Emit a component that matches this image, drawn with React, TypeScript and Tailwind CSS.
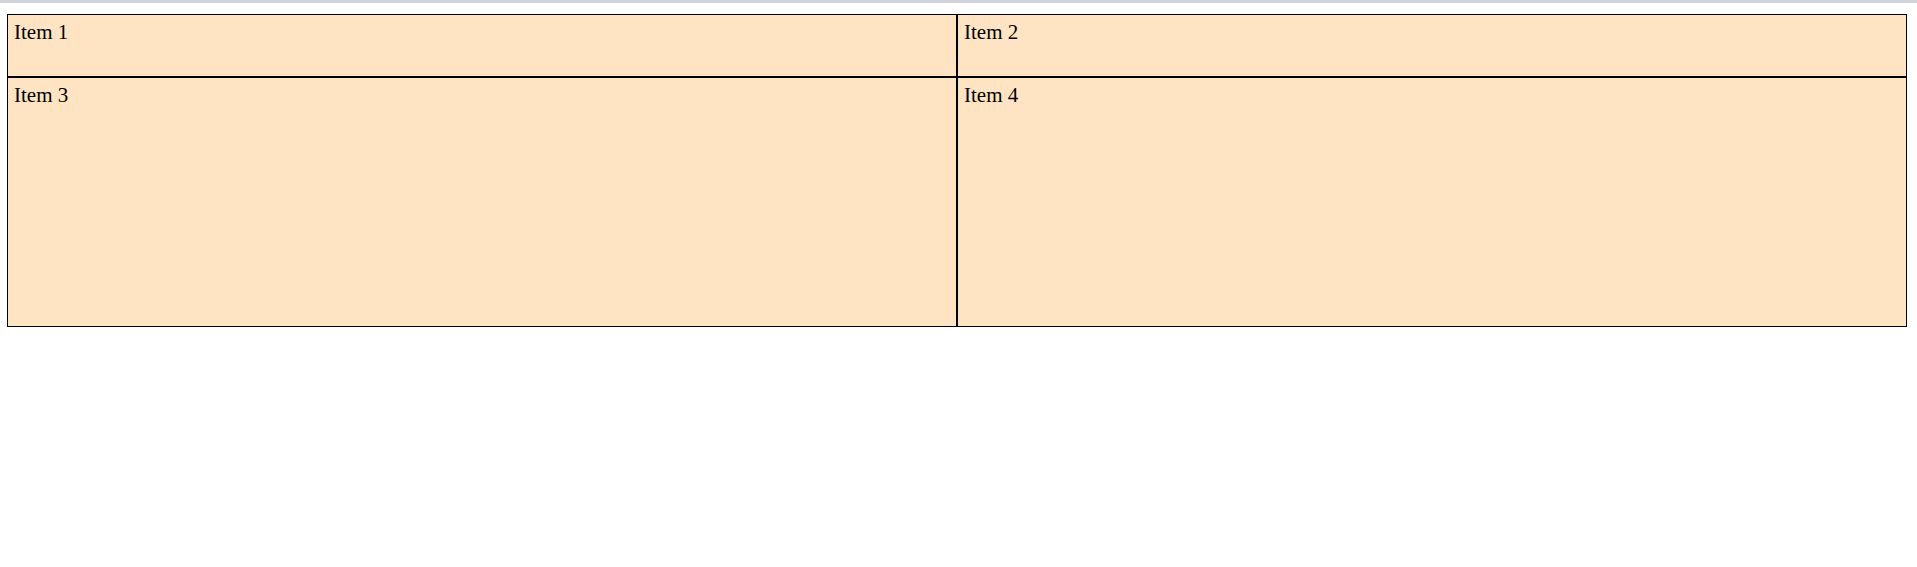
const items = ["Item 1", "Item 2", "Item 3", "Item 4"];

export default function App() {
  return (
    <div className="min-h-[567px] bg-white">
      <div className="h-[3px] bg-[#d2d3d8]" />
      <div className="pl-[7px] pt-[11px]">
        <div className="grid w-[1900px] grid-cols-2 grid-rows-[63px_250px]">
          {items.map((label) => (
            <div
              key={label}
              className="border border-black bg-[#ffe4c4] px-[6px] pt-[2px] text-[21px] text-black"
              style={{ fontFamily: '"Liberation Serif", "Times New Roman", serif' }}
            >
              {label}
            </div>
          ))}
        </div>
      </div>
    </div>
  );
}
